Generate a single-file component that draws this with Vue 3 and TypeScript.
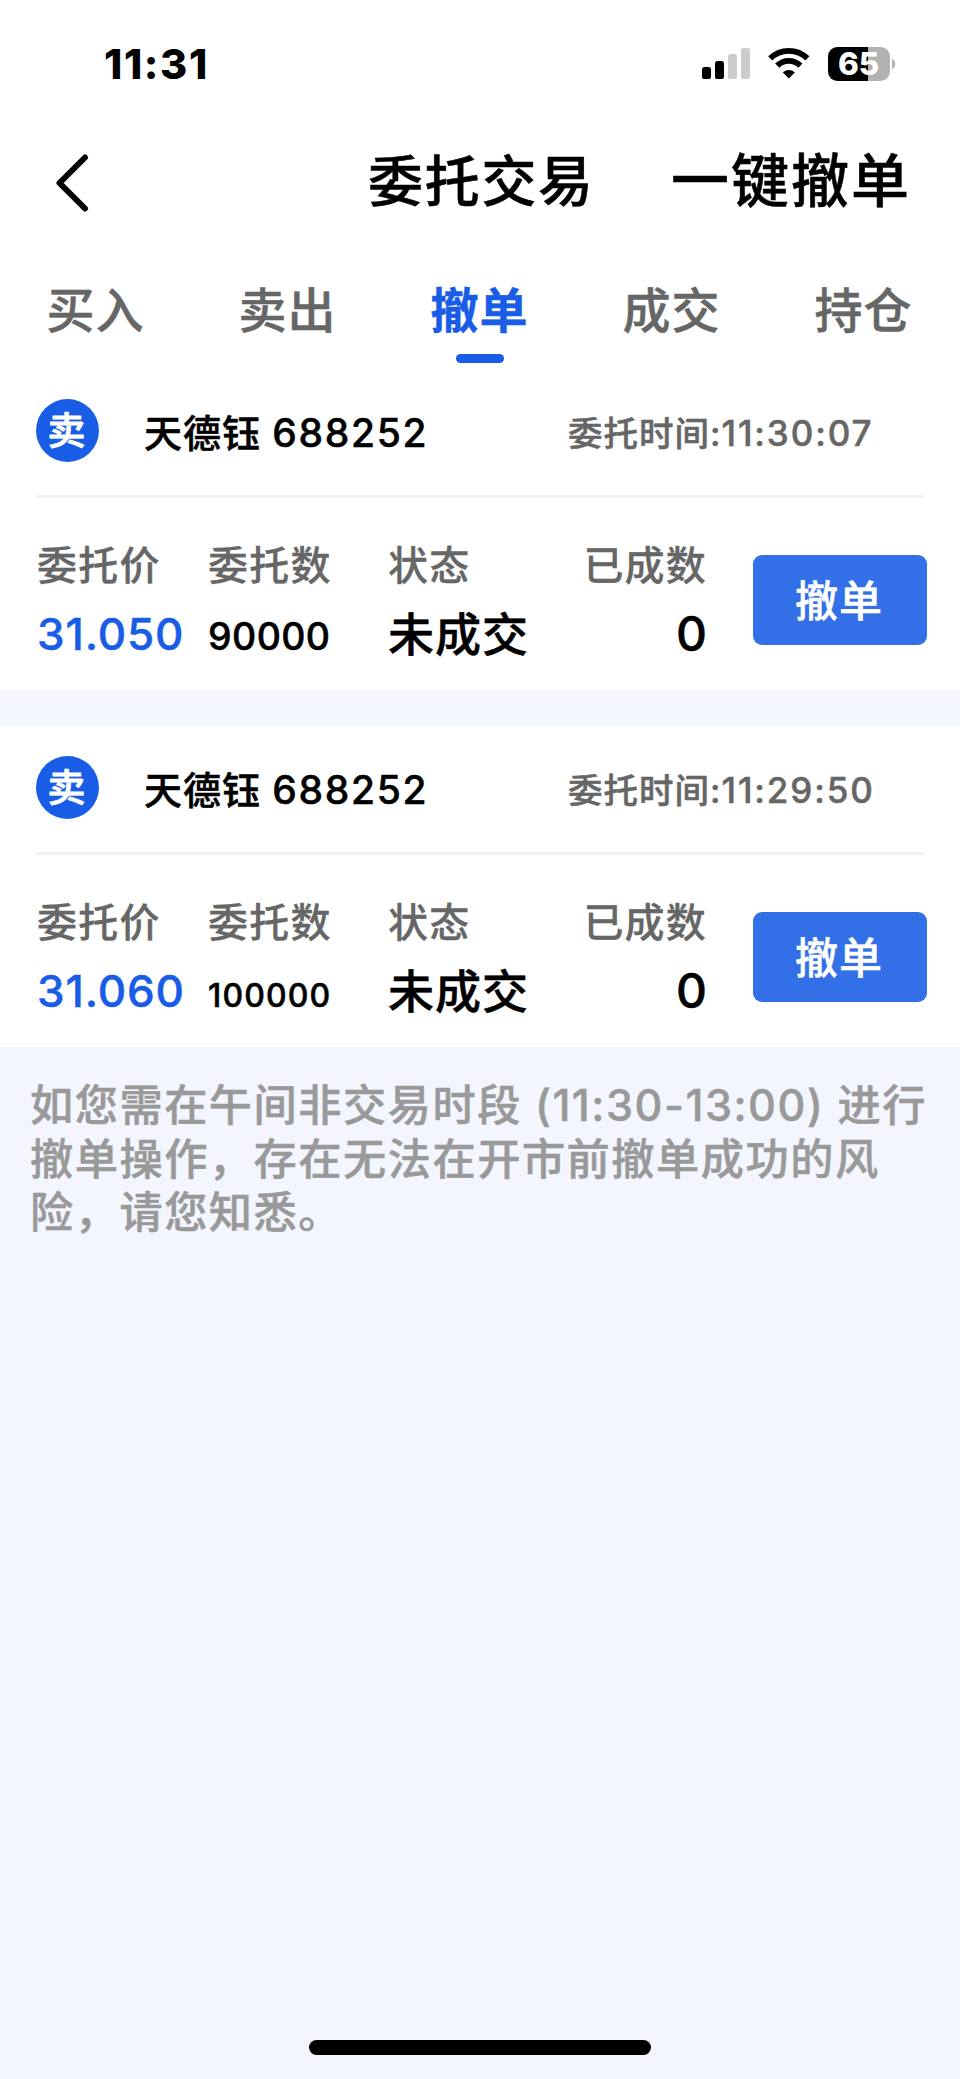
<script setup lang="ts">
interface Order {
  name: string
  code: string
  time: string
  price: string
  quantity: string
  status: string
  filled: string
}

const tabs: string[] = ['买入', '卖出', '撤单', '成交', '持仓']
const activeTab = '撤单'

const orders: Order[] = [
  { name: '天德钰', code: '688252', time: '11:30:07', price: '31.050', quantity: '90000', status: '未成交', filled: '0' },
  { name: '天德钰', code: '688252', time: '11:29:50', price: '31.060', quantity: '100000', status: '未成交', filled: '0' },
]
</script>

<template>
  <div class="screen">
    <div class="statusbar">
      <span class="clock">11:31</span>
      <svg class="indicators" width="196" height="40" viewBox="0 0 196 40">
        <rect x="2" y="20" width="9" height="12" rx="2.6" fill="#000" />
        <rect x="15" y="14" width="9" height="18" rx="2.6" fill="#000" />
        <rect x="28" y="7" width="9" height="25" rx="2.6" fill="#ccc" />
        <rect x="41" y="1" width="9" height="31" rx="2.6" fill="#ccc" />
        <g fill="none" stroke="#000" stroke-width="5.8">
          <path d="M70.2 11.4a26.5 26.5 0 0 1 37.2 0" />
          <path d="M77.2 18.6a16.5 16.5 0 0 1 23.2 0" />
        </g>
        <path d="M88.8 31.6l-6-6.2a8.7 8.7 0 0 1 12 0z" fill="#000" />
        <clipPath id="charge"><rect x="128" y="0" width="40" height="36" /></clipPath>
        <rect x="128" y="0" width="62" height="34" rx="9.5" fill="#b2b2b2" />
        <rect x="128" y="0" width="62" height="34" rx="9.5" fill="#000" clip-path="url(#charge)" />
        <path d="M192 11.5q3.2 1.6 3.2 5.5t-3.2 5.5z" fill="#b2b2b2" />
        <text class="level" x="158.700" y="28" text-anchor="middle">65</text>
      </svg>
    </div>

    <header class="header">
      <svg class="back" width="34" height="60" viewBox="0 0 34 60">
        <path d="M29 4.500L3.500 30L29 55.500" fill="none" stroke="#000" stroke-width="6" stroke-linecap="round" stroke-linejoin="round" />
      </svg>
      <h1 class="title">委托交易</h1>
      <span class="cancel-all">一键撤单</span>
    </header>

    <nav class="tabs">
      <div v-for="tab in tabs" :key="tab" class="tab" :class="{ active: tab === activeTab }">
        <span class="tab-text">{{ tab }}</span>
      </div>
    </nav>

    <main class="orders">
      <section v-for="order in orders" :key="order.time" class="order">
        <div class="order-head">
          <span class="side">卖</span>
          <span class="stock">{{ order.name }} <span class="code">{{ order.code }}</span></span>
          <span class="time">委托时间:<span class="time-value">{{ order.time }}</span></span>
        </div>
        <div class="order-body">
          <div class="cell first">
            <span class="label">委托价</span>
            <span class="value price">{{ order.price }}</span>
          </div>
          <div class="cell">
            <span class="label">委托数</span>
            <span class="value quantity" :class="{ compact: order.quantity.length > 5 }">{{ order.quantity }}</span>
          </div>
          <div class="cell">
            <span class="label">状态</span>
            <span class="value status">{{ order.status }}</span>
          </div>
          <div class="cell right">
            <span class="label">已成数</span>
            <span class="value filled">{{ order.filled }}</span>
          </div>
          <button class="cancel" type="button">撤单</button>
        </div>
      </section>
    </main>

    <p class="notice">如您需在午间非交易时段 (11:30-13:00) 进行撤单操作，存在无法在开市前撤单成功的风险，请您知悉。</p>

    <div class="home-bar"></div>
  </div>
</template>

<style>
body {
  margin: 0;
  background: #f3f6fe;
}
</style>

<style scoped>
.screen {
  width: 960px;
  height: 2079px;
  display: flex;
  flex-direction: column;
  background: #f3f6fe;
  color: #000;
  font-family: Inter, "Noto Sans CJK SC", sans-serif;
  font-weight: 500;
  -webkit-text-stroke: 0.5px;
  overflow: hidden;
}
.statusbar {
  flex: none;
  height: 122px;
  box-sizing: border-box;
  padding: 47px 64px 0 104px;
  display: flex;
  justify-content: space-between;
  align-items: flex-start;
  background: #fff;
  -webkit-text-stroke: 0;
}
.clock {
  font-size: 41.5px;
  line-height: 34px;
  font-weight: 800;
  letter-spacing: 1.6px;
}
.indicators {
  display: block;
  overflow: visible;
}
.level {
  font-size: 31.5px;
  font-weight: 800;
  fill: #fff;
}
.header {
  flex: none;
  height: 122px;
  box-sizing: border-box;
  padding: 0 49px 0 56px;
  display: grid;
  grid-template-columns: 312px 1fr auto;
  align-items: center;
  background: #fff;
}
.title {
  margin: 0;
  padding-bottom: 4px;
  font-size: 55px;
  letter-spacing: 1.7px;
  font-weight: 500;
  line-height: 80px;
}
.cancel-all {
  padding-bottom: 4px;
  font-size: 58px;
  letter-spacing: 2px;
  line-height: 80px;
}
.tabs {
  flex: none;
  height: 125px;
  display: grid;
  grid-template-columns: repeat(5, 1fr);
  background: #fff;
}
.tab {
  display: flex;
  flex-direction: column;
  align-items: center;
  padding-top: 37px;
  font-size: 48px;
  line-height: 60px;
  letter-spacing: 1px;
  color: #666;
}
.tab-text {
  margin-right: 1px;
}
.tab.active {
  color: #195de6;
  font-weight: 700;
}
.tab.active::after {
  content: "";
  width: 48px;
  height: 9px;
  margin-top: 13px;
  border-radius: 5px;
  background: #195de6;
}
.orders {
  flex: none;
  display: flex;
  flex-direction: column;
  gap: 36px;
}
.order {
  height: 321px;
  box-sizing: border-box;
  padding: 0 33px 0 36px;
  background: #fff;
}
.order-head {
  height: 129px;
  box-sizing: border-box;
  margin-right: 3px;
  padding-top: 30px;
  display: grid;
  grid-template-columns: 108px 424px 1fr;
  align-items: start;
  border-bottom: 3px solid #f1f1f1;
}
.side {
  width: 63px;
  height: 63px;
  box-sizing: border-box;
  padding-right: 2px;
  border-radius: 50%;
  background: #195de6;
  color: #fff;
  font-size: 38px;
  line-height: 63px;
  text-align: center;
  -webkit-text-stroke: 0.8px;
}
.stock {
  font-size: 38px;
  line-height: 67px;
  letter-spacing: 1px;
  white-space: nowrap;
}
.code {
  font-size: 39px;
  letter-spacing: 1.7px;
}
.time {
  font-size: 34.5px;
  line-height: 69px;
  letter-spacing: 1px;
  color: #666;
  white-space: nowrap;
}
.time-value {
  font-size: 35px;
  letter-spacing: 1.9px;
}
.order-body {
  display: grid;
  grid-template-columns: 172px 180px 154px 165px 46px 174px;
}
.cell {
  display: flex;
  flex-direction: column;
  padding-top: 37px;
}
.cell.first {
  padding-left: 1px;
}
.cell.right {
  align-items: flex-end;
}
.label {
  font-size: 40px;
  line-height: 61px;
  letter-spacing: 1.2px;
  color: #666;
  white-space: nowrap;
  -webkit-text-stroke: 0.3px;
}
.value {
  line-height: 77px;
  white-space: nowrap;
}
.price {
  font-size: 44px;
  letter-spacing: 0.9px;
  color: #195de6;
}
.quantity {
  font-size: 37.5px;
  line-height: 82px;
  letter-spacing: 0.4px;
}
.quantity.compact {
  font-size: 32px;
  line-height: 86px;
  letter-spacing: 1.1px;
}
.status {
  font-size: 46px;
  letter-spacing: 1px;
}
.filled {
  padding-right: 1px;
  margin-right: -1px;
  font-size: 48px;
  line-height: 76px;
}
.cancel {
  grid-column: 6;
  width: 174px;
  height: 90px;
  margin: 57px 0 0;
  padding: 2px 2px 0 0;
  border: 0;
  border-radius: 9px;
  background: #3370e7;
  color: #fff;
  font: inherit;
  font-size: 43px;
  line-height: 88px;
  letter-spacing: 1px;
}
.notice {
  margin: 32px 30px 0;
  font-size: 43.2px;
  line-height: 53.7px;
  letter-spacing: 1.53px;
  color: #999;
}
.home-bar {
  width: 342px;
  height: 15px;
  margin: auto auto 24px;
  border-radius: 8px;
  background: #000;
}
</style>
